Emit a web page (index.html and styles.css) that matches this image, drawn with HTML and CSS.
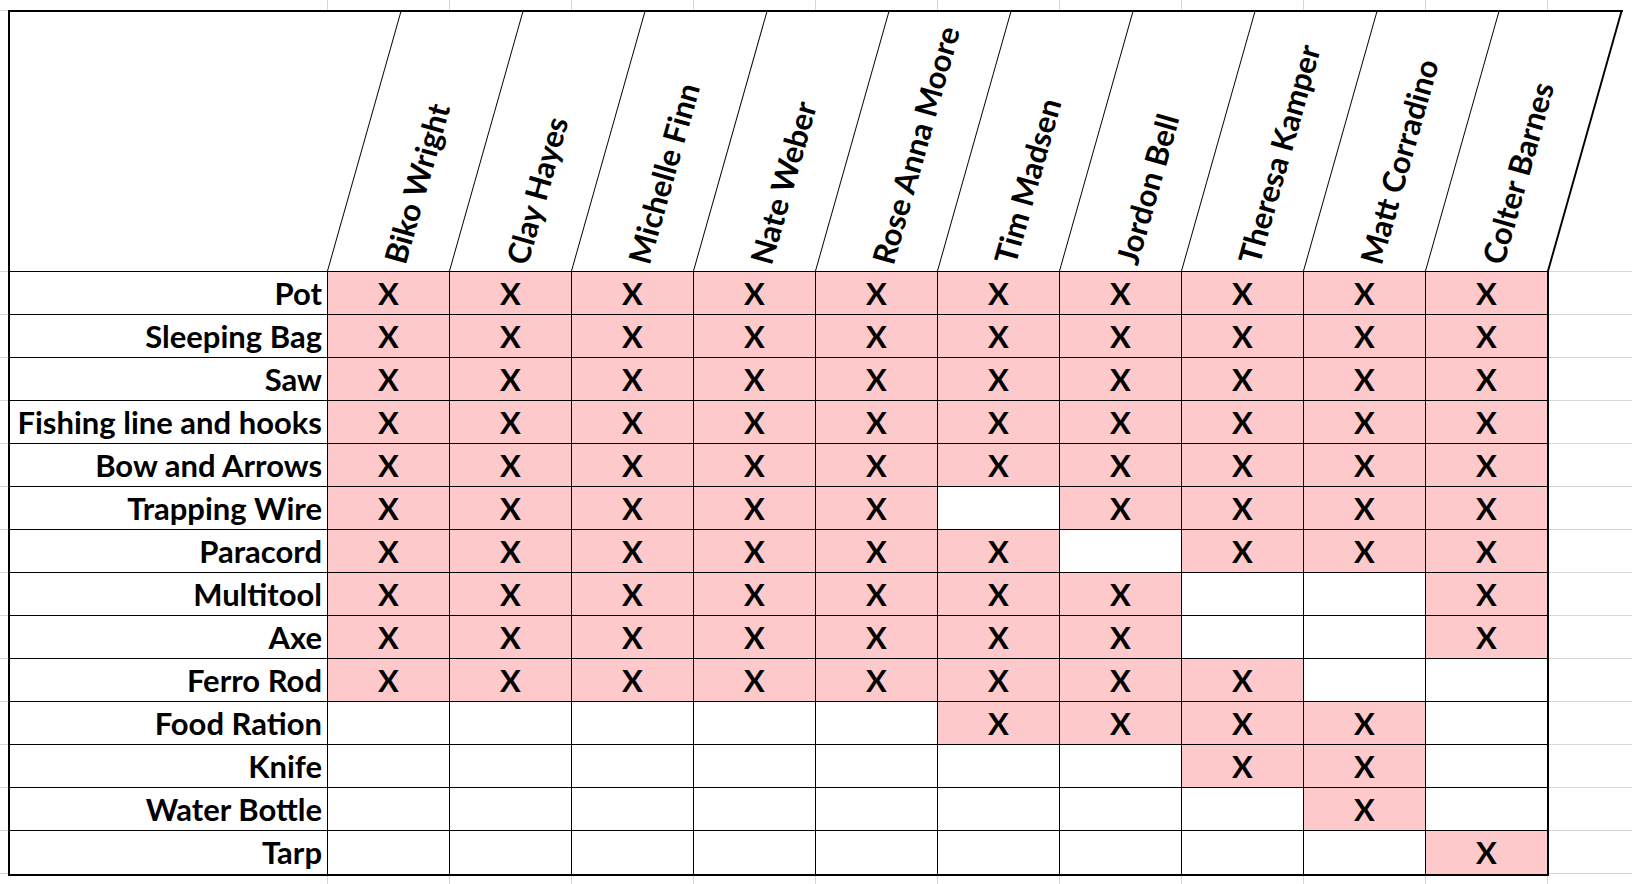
FILE: index.html
```html
<!DOCTYPE html>
<html lang="en">
<head>
<meta charset="utf-8">
<title>Gear checklist</title>
<link rel="stylesheet" href="styles.css">
</head>
<body>
<div class="header">
  <div class="corner"></div>
  <div class="hcell"><div class="frame"></div><div class="name">Biko Wright</div></div>
  <div class="hcell"><div class="frame"></div><div class="name">Clay Hayes</div></div>
  <div class="hcell"><div class="frame"></div><div class="name">Michelle Finn</div></div>
  <div class="hcell"><div class="frame"></div><div class="name">Nate Weber</div></div>
  <div class="hcell"><div class="frame"></div><div class="name">Rose Anna Moore</div></div>
  <div class="hcell"><div class="frame"></div><div class="name">Tim Madsen</div></div>
  <div class="hcell"><div class="frame"></div><div class="name">Jordon Bell</div></div>
  <div class="hcell"><div class="frame"></div><div class="name">Theresa Kamper</div></div>
  <div class="hcell"><div class="frame"></div><div class="name">Matt Corradino</div></div>
  <div class="hcell last"><div class="frame"></div><div class="name">Colter Barnes</div></div>
  <div class="spacer"></div>
</div>
<div class="grid">
  <div class="label">Pot</div><div class="c x">X</div><div class="c x">X</div><div class="c x">X</div><div class="c x">X</div><div class="c x">X</div><div class="c x">X</div><div class="c x">X</div><div class="c x">X</div><div class="c x">X</div><div class="c x">X</div>
  <div class="label">Sleeping Bag</div><div class="c x">X</div><div class="c x">X</div><div class="c x">X</div><div class="c x">X</div><div class="c x">X</div><div class="c x">X</div><div class="c x">X</div><div class="c x">X</div><div class="c x">X</div><div class="c x">X</div>
  <div class="label">Saw</div><div class="c x">X</div><div class="c x">X</div><div class="c x">X</div><div class="c x">X</div><div class="c x">X</div><div class="c x">X</div><div class="c x">X</div><div class="c x">X</div><div class="c x">X</div><div class="c x">X</div>
  <div class="label">Fishing line and hooks</div><div class="c x">X</div><div class="c x">X</div><div class="c x">X</div><div class="c x">X</div><div class="c x">X</div><div class="c x">X</div><div class="c x">X</div><div class="c x">X</div><div class="c x">X</div><div class="c x">X</div>
  <div class="label">Bow and Arrows</div><div class="c x">X</div><div class="c x">X</div><div class="c x">X</div><div class="c x">X</div><div class="c x">X</div><div class="c x">X</div><div class="c x">X</div><div class="c x">X</div><div class="c x">X</div><div class="c x">X</div>
  <div class="label">Trapping Wire</div><div class="c x">X</div><div class="c x">X</div><div class="c x">X</div><div class="c x">X</div><div class="c x">X</div><div class="c"></div><div class="c x">X</div><div class="c x">X</div><div class="c x">X</div><div class="c x">X</div>
  <div class="label">Paracord</div><div class="c x">X</div><div class="c x">X</div><div class="c x">X</div><div class="c x">X</div><div class="c x">X</div><div class="c x">X</div><div class="c"></div><div class="c x">X</div><div class="c x">X</div><div class="c x">X</div>
  <div class="label">Multitool</div><div class="c x">X</div><div class="c x">X</div><div class="c x">X</div><div class="c x">X</div><div class="c x">X</div><div class="c x">X</div><div class="c x">X</div><div class="c"></div><div class="c"></div><div class="c x">X</div>
  <div class="label">Axe</div><div class="c x">X</div><div class="c x">X</div><div class="c x">X</div><div class="c x">X</div><div class="c x">X</div><div class="c x">X</div><div class="c x">X</div><div class="c"></div><div class="c"></div><div class="c x">X</div>
  <div class="label">Ferro Rod</div><div class="c x">X</div><div class="c x">X</div><div class="c x">X</div><div class="c x">X</div><div class="c x">X</div><div class="c x">X</div><div class="c x">X</div><div class="c x">X</div><div class="c"></div><div class="c"></div>
  <div class="label">Food Ration</div><div class="c"></div><div class="c"></div><div class="c"></div><div class="c"></div><div class="c"></div><div class="c x">X</div><div class="c x">X</div><div class="c x">X</div><div class="c x">X</div><div class="c"></div>
  <div class="label">Knife</div><div class="c"></div><div class="c"></div><div class="c"></div><div class="c"></div><div class="c"></div><div class="c"></div><div class="c"></div><div class="c x">X</div><div class="c x">X</div><div class="c"></div>
  <div class="label">Water Bottle</div><div class="c"></div><div class="c"></div><div class="c"></div><div class="c"></div><div class="c"></div><div class="c"></div><div class="c"></div><div class="c"></div><div class="c x">X</div><div class="c"></div>
  <div class="label">Tarp</div><div class="c"></div><div class="c"></div><div class="c"></div><div class="c"></div><div class="c"></div><div class="c"></div><div class="c"></div><div class="c"></div><div class="c"></div><div class="c x">X</div>
</div>
</body>
</html>
```

FILE: styles.css
```css
html, body {
  margin: 0;
  padding: 0;
}

body {
  width: 1632px;
  height: 884px;
  overflow: hidden;
  background-color: #fff;
  background-image:
    linear-gradient(#d6d6d6, #d6d6d6),
    repeating-linear-gradient(to right, #d6d6d6 0 1px, transparent 1px 122px),
    repeating-linear-gradient(to bottom, #d6d6d6 0 1px, transparent 1px 43px);
  background-size: 8px 1px, 1305px 884px, 1632px 700px;
  background-position: 0 10px, 327px 0, 0 271px;
  background-repeat: no-repeat;
  font-family: Lato, "Open Sans", sans-serif;
  font-weight: 700;
  color: #000;
}

.header {
  display: flex;
  width: max-content;
  height: 259px;
  margin: 10px 0 0 8px;
  border-top: 2px solid #000;
  border-left: 2px solid #000;
  background: #fff;
}

.corner {
  width: 317px;
}

.spacer {
  width: 74px;
}

.hcell {
  width: 122px;
  display: grid;
}

.hcell.last {
  width: 124px;
}

.frame {
  grid-area: 1 / 1;
  border-left: 1px solid #000;
  transform: skewX(-15.8deg);
  transform-origin: 0 100%;
}

.hcell.last .frame {
  border-right: 2px solid #000;
}

.name {
  grid-area: 1 / 1;
  align-self: end;
  justify-self: start;
  margin: 0 0 8px 49px;
  writing-mode: vertical-rl;
  white-space: nowrap;
  font-size: 31px;
  line-height: 1.2;
  transform-origin: 50% 0;
  transform: translateY(100%) rotate(195.8deg);
}

.grid {
  display: grid;
  grid-template-columns: 318px repeat(9, 122px) 121px;
  grid-auto-rows: 43px;
  width: max-content;
  margin-left: 8px;
  border: 2px solid #000;
  border-top: 1px solid #000;
  background: #fff;
}

.grid > div {
  box-sizing: border-box;
  border-right: 1px solid #000;
  border-bottom: 1px solid #000;
  font-size: 31px;
  line-height: 42px;
  white-space: nowrap;
}

.grid > div:nth-child(11n) {
  border-right: 0;
}

.grid > div:nth-last-child(-n+11) {
  border-bottom: 0;
}

.label {
  text-align: right;
  padding-right: 5px;
}

.c {
  text-align: center;
}

.x {
  background: #fdc9ca;
}
```
